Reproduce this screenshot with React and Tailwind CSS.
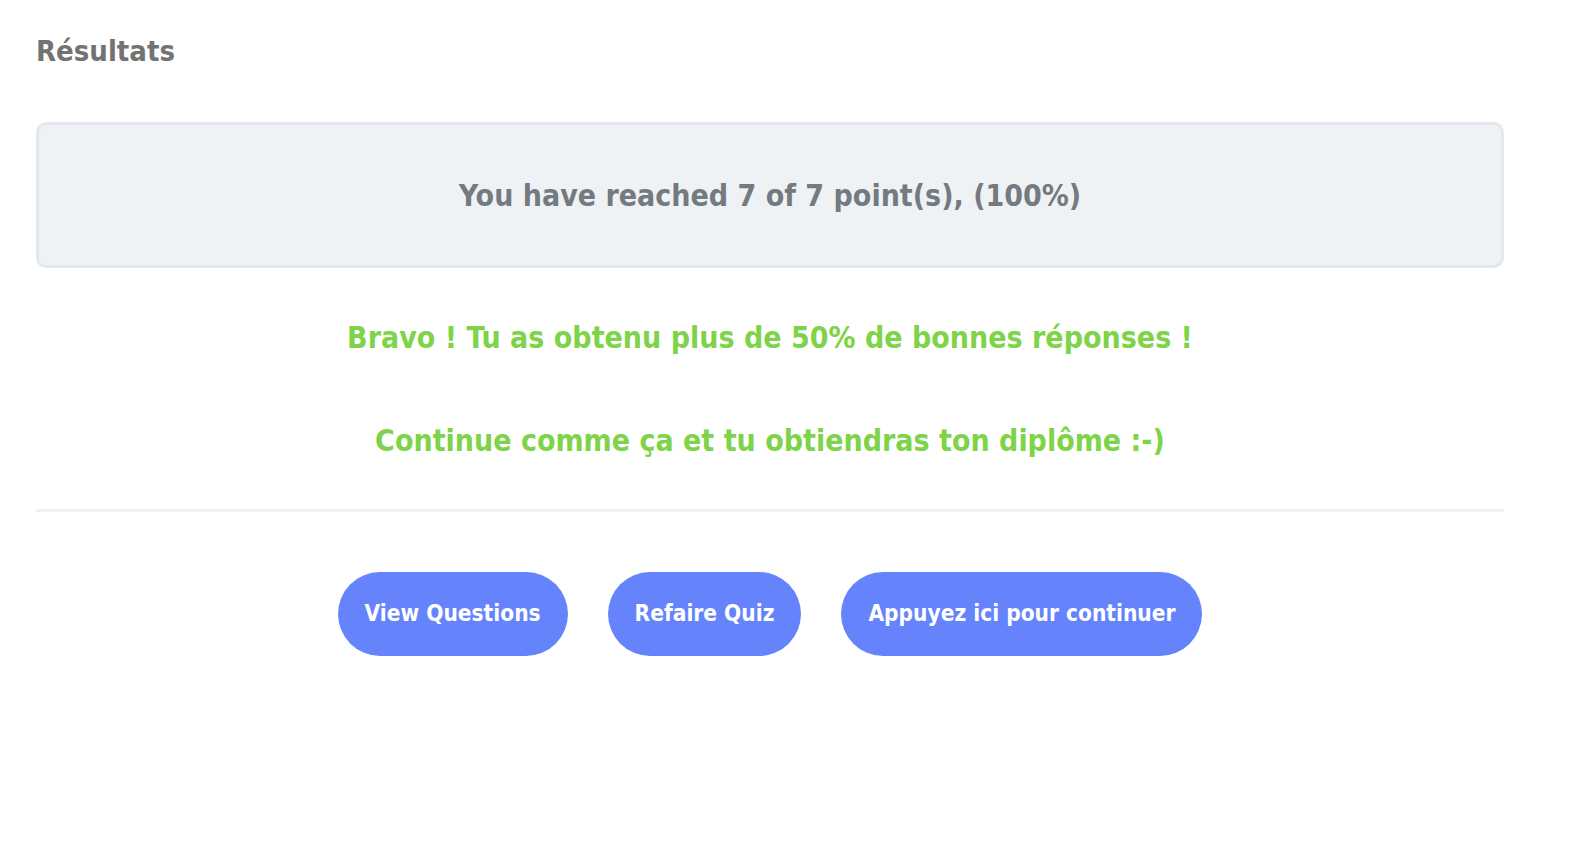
import React from 'react';

const font = { fontFamily: '"DejaVu Sans Condensed", "Liberation Sans", sans-serif' };

const App = () => {
    const buttons = ['View Questions', 'Refaire Quiz', 'Appuyez ici pour continuer'];

    return (
        <div className="min-h-screen bg-white" style={font}>
            <div className="w-[1468px] ml-[36px] pt-[31px]">
                <h2 className="text-[29px] leading-[40px] font-bold text-[#737373]">Résultats</h2>

                {/* Score box */}
                <div className="mt-[51px] h-[146px] rounded-[10px] border-[3px] border-[#e3e7ee] bg-[#eff2f5] flex items-center justify-center">
                    <span className="text-[30px] font-bold text-[#737a80]">
                        You have reached 7 of 7 point(s), (100%)
                    </span>
                </div>

                {/* Messages */}
                <div className="text-center text-[#7ed348] text-[30px] font-bold leading-[40px]">
                    <p className="mt-[50px]">Bravo ! Tu as obtenu plus de 50% de bonnes réponses !</p>
                    <p className="mt-[63px]">Continue comme ça et tu obtiendras ton diplôme :-)</p>
                </div>

                <div className="mt-[48px] h-[3px] bg-[#eef1f4]" />

                {/* Actions */}
                <div className="mt-[60px] flex justify-center gap-[40px]">
                    {buttons.map(label => (
                        <button
                            key={label}
                            className="h-[84px] px-[27px] rounded-full bg-[#6584fb] text-white text-[22.5px] font-bold"
                        >
                            {label}
                        </button>
                    ))}
                </div>
            </div>
        </div>
    );
};

export default App;
